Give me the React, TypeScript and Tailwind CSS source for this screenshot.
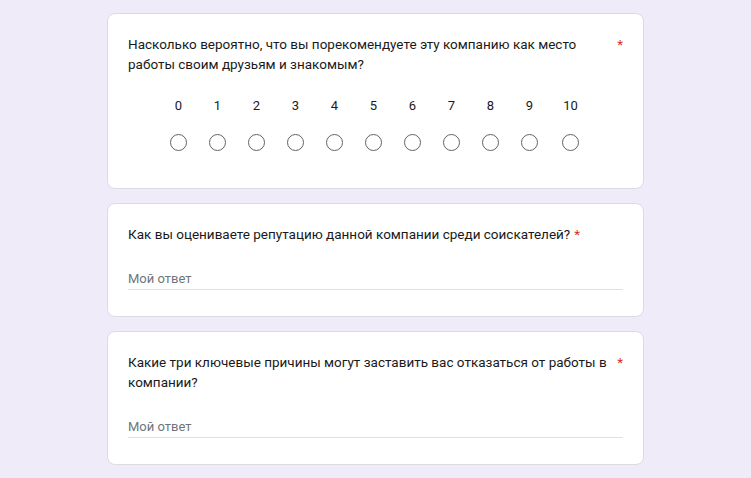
const scale = ['0', '1', '2', '3', '4', '5', '6', '7', '8', '9', '10'];

function Title({ text }: { text: string }) {
  return (
    <div className="flex items-start text-[13.5px] leading-[20px] text-[#1a1a1a]">
      <span>{text}</span>
      <span className="ml-1 text-[#d93025]">*</span>
    </div>
  );
}

function Card({ children }: { children: React.ReactNode }) {
  return (
    <div className="rounded-lg border border-[#dadce0] bg-white px-5 pt-5">{children}</div>
  );
}

function ShortAnswer() {
  return (
    <div className="mt-[25px] pb-[26px]">
      <div className="border-b border-[#e0e0e0] text-[13px] leading-[20px] text-[#70757a]">
        Мой ответ
      </div>
    </div>
  );
}

export default function App() {
  return (
    <div
      className="min-h-screen bg-[#f0ebf8] pt-[13px] pb-4"
      style={{ fontFamily: 'Roboto, "Noto Sans", sans-serif' }}
    >
      <div className="mx-auto flex w-[537px] flex-col gap-[14px]">
        <Card>
          <Title text="Насколько вероятно, что вы порекомендуете эту компанию как место работы своим друзьям и знакомым?" />
          <div className="mt-[22px] flex justify-center pb-[37px]">
            {scale.map((n) => (
              <div
                key={n}
                className={`flex flex-col items-center ${n === '10' ? 'w-[43px]' : 'w-[39px]'}`}
              >
                <span className="text-[13px] leading-[20px] text-[#1a1a1a]">{n}</span>
                <span className="mt-[18px] h-[17px] w-[17px] rounded-full border-[1.5px] border-[#5f6368]" />
              </div>
            ))}
          </div>
        </Card>
        <Card>
          <Title text="Как вы оцениваете репутацию данной компании среди соискателей?" />
          <ShortAnswer />
        </Card>
        <Card>
          <Title text="Какие три ключевые причины могут заставить вас отказаться от работы в компании?" />
          <ShortAnswer />
        </Card>
      </div>
    </div>
  );
}
